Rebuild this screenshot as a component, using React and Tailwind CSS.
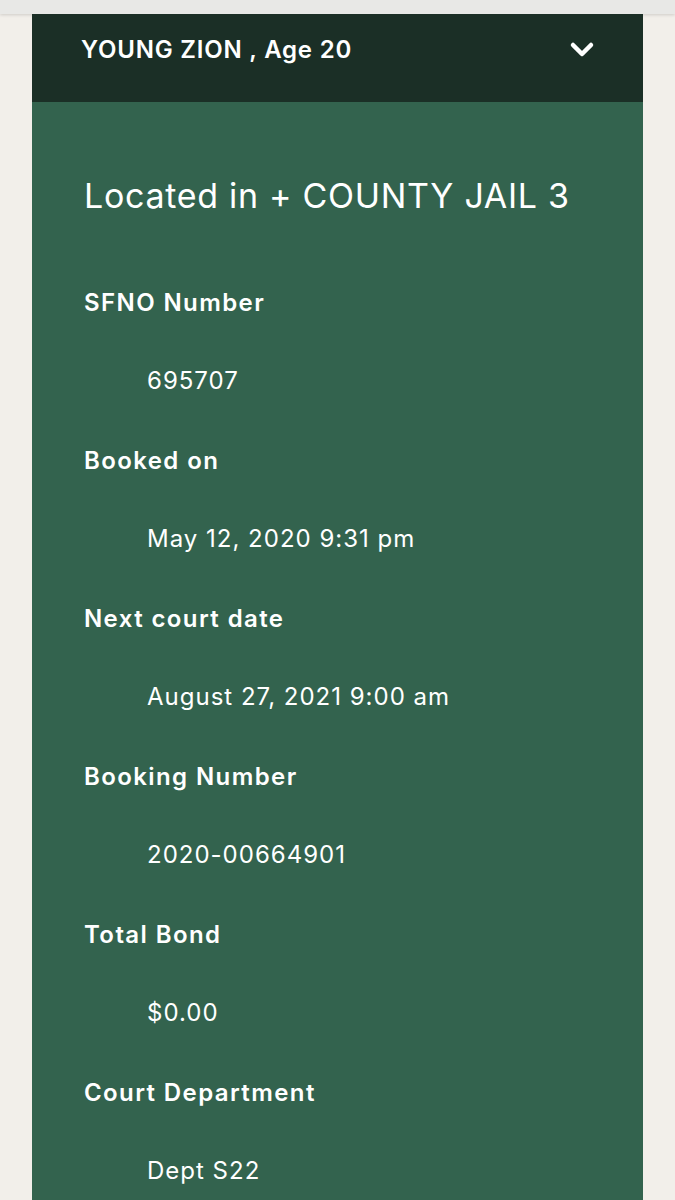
import React from "react";

const rows = [
  { label: "SFNO Number", value: "695707" },
  { label: "Booked on", value: "May 12, 2020 9:31 pm" },
  { label: "Next court date", value: "August 27, 2021 9:00 am" },
  { label: "Booking Number", value: "2020-00664901" },
  { label: "Total Bond", value: "$0.00" },
  { label: "Court Department", value: "Dept S22" },
];

const Chevron = () => (
  <svg width="26" height="18" viewBox="0 0 26 18" fill="none">
    <polyline
      points="4,4 13,13 22,4"
      stroke="white"
      strokeWidth="4.5"
      strokeLinecap="round"
      strokeLinejoin="round"
    />
  </svg>
);

const App = () => {
  return (
    <div
      className="min-h-[1200px] h-[1200px] overflow-hidden bg-[#f2efea] text-white"
      style={{ fontFamily: "Inter, 'Open Sans', sans-serif" }}
    >
      <div className="h-[14px] bg-[#e8e8e6] shadow-[0_1px_3px_rgba(0,0,0,0.15)]" />
      <div className="mx-[32px]">
        {/* header */}
        <div className="h-[88px] bg-[#1b2f26] pl-[49px] pr-[48px] pb-[16px] flex items-center justify-between">
          <h3 className="text-[24px] font-semibold tracking-[0.8px] leading-none">
            YOUNG ZION , Age 20
          </h3>
          <Chevron />
        </div>

        {/* detail panel */}
        <div className="bg-[#33634e] pl-[52px] pt-[73px] pb-[40px]">
          <h2 className="text-[34px] font-normal leading-[42px] tracking-[0.7px]">
            Located in + COUNTY JAIL 3
          </h2>
          <dl className="mt-[70px]">
            {rows.map((r, i) => (
              <div key={i} className="mb-[48px]">
                <dt className="text-[24px] font-semibold leading-[32px] tracking-[1.4px]">
                  {r.label}
                </dt>
                <dd className="mt-[46px] ml-[63px] text-[24px] font-normal leading-[32px] tracking-[1px]">
                  {r.value}
                </dd>
              </div>
            ))}
          </dl>
        </div>
      </div>
    </div>
  );
};

export default App;
